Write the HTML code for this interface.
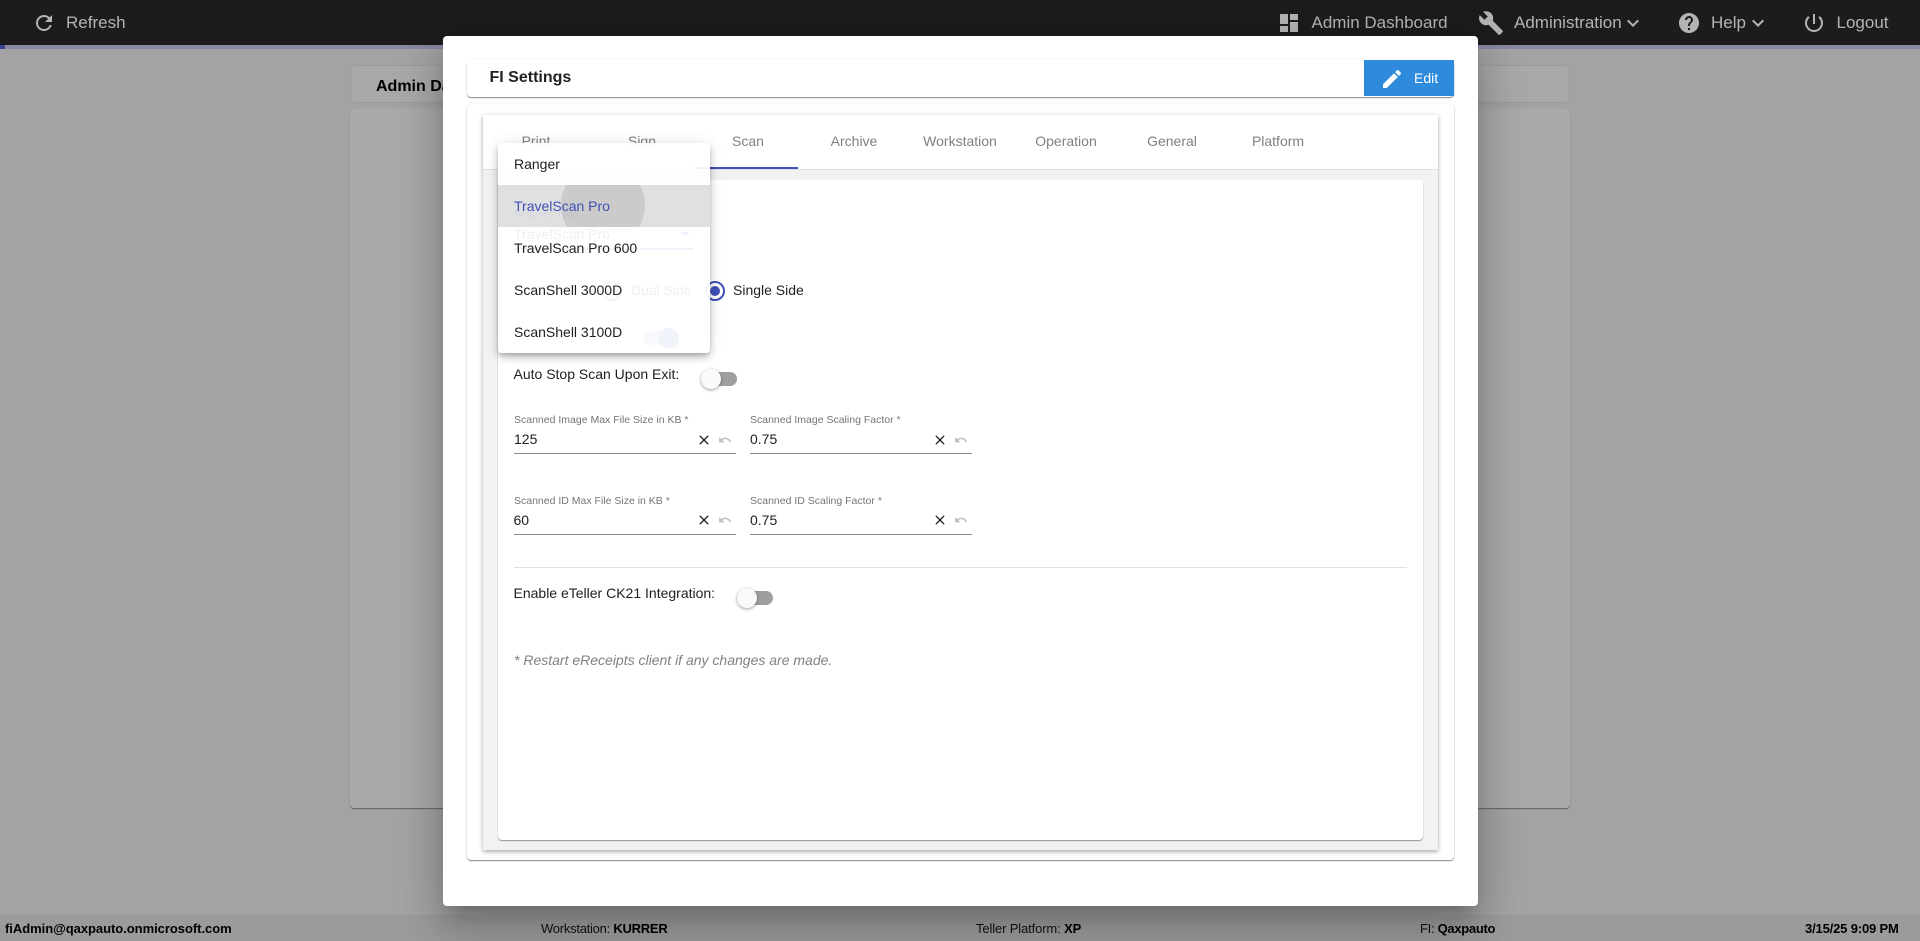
<!DOCTYPE html>
<html><head><meta charset="utf-8"><title>FI Settings</title>
<style>
html,body{margin:0;padding:0;width:1920px;height:941px;overflow:hidden;background:#a3a3a3;font-family:"Liberation Sans",Arial,sans-serif;}
.a{position:absolute;}
.t{position:absolute;white-space:nowrap;line-height:20px;}
svg{position:absolute;display:block;}
.hd{color:#b4b4b4;font-size:17px;}
.tab{position:absolute;top:131px;width:106px;text-align:center;font-size:14px;line-height:20px;color:#808080;}
.lbl{font-size:10.5px;color:#757575;line-height:14px;}
.v{font-size:14px;color:#212121;}
.ft{font-size:13px;color:#111;transform-origin:left center;}
.ft b{color:#000;}
.tk{position:absolute;width:36px;height:14px;border-radius:7px;background:#9e9e9e;}
.th{position:absolute;width:20px;height:20px;border-radius:50%;background:#fafafa;box-shadow:0 1px 3px rgba(0,0,0,.4);}
.li{position:absolute;left:16px;font-size:14px;line-height:20px;color:#212121;white-space:nowrap;}
</style></head><body>
<!-- background -->
<div class="a" style="left:0;top:0;width:1920px;height:45px;background:#1c1c1c"></div>
<div class="a" style="left:0;top:45px;width:1920px;height:4px;background:#8788a3"></div>
<div class="a" style="left:0;top:45px;width:5px;height:4px;background:#3a4592"></div>
<div class="a" style="left:350px;top:65px;width:1220px;height:38px;background:#a8a8a8;border:1px solid #9b9b9b;border-radius:4px;box-sizing:border-box"></div>
<div class="t" style="left:376px;top:77px;font-size:16px;font-weight:bold;color:#000">Admin Dashboard</div>
<div class="a" style="left:350px;top:109px;width:1220px;height:699px;background:#a9a9a9;border-radius:4px;box-shadow:0 1px 1px rgba(0,0,0,.4)"></div>
<!-- header -->
<svg style="left:32px;top:11px" width="24" height="24" viewBox="0 0 24 24" fill="#b4b4b4"><path d="M17.65 6.35C16.2 4.9 14.21 4 12 4c-4.42 0-7.99 3.58-7.99 8s3.57 8 7.99 8c3.73 0 6.84-2.55 7.73-6h-2.08c-.82 2.33-3.04 4-5.65 4-3.31 0-6-2.69-6-6s2.69-6 6-6c1.66 0 3.14.69 4.22 1.78L13 11h7V4l-2.35 2.35z"/></svg>
<div class="t hd" style="left:66px;top:13px">Refresh</div>
<svg style="left:1277px;top:11px" width="24" height="24" viewBox="0 0 24 24" fill="#b4b4b4"><path d="M3 13h8V3H3v10zm0 8h8v-6H3v6zm10 0h8V11h-8v10zm0-18v6h8V3h-8z"/></svg>
<div class="t hd" style="left:1311.5px;top:13px">Admin Dashboard</div>
<svg style="left:1478px;top:10px" width="26" height="26" viewBox="0 0 24 24" fill="#b4b4b4"><path d="M22.7 19l-9.1-9.1c.9-2.3.4-5-1.5-6.9-2-2-5-2.4-7.4-1.3L9 6 6 9 1.6 4.7C.4 7.1.9 10.1 2.9 12.1c1.9 1.9 4.6 2.4 6.9 1.5l9.1 9.1c.4.4 1 .4 1.4 0l2.3-2.3c.5-.4.5-1.1.1-1.4z"/></svg>
<div class="t hd" style="left:1514px;top:13px">Administration</div>
<svg style="left:1621px;top:11px" width="24" height="24" viewBox="0 0 24 24" fill="#b4b4b4"><path d="M16.59 8.59L12 13.17 7.41 8.59 6 10l6 6 6-6z"/></svg>
<svg style="left:1677px;top:11px" width="24" height="24" viewBox="0 0 24 24" fill="#b4b4b4"><path d="M12 2C6.48 2 2 6.48 2 12s4.48 10 10 10 10-4.48 10-10S17.52 2 12 2zm1 17h-2v-2h2v2zm2.07-7.75l-.9.92C13.45 12.9 13 13.5 13 15h-2v-.5c0-1.1.45-2.1 1.17-2.83l1.24-1.26c.37-.36.59-.86.59-1.41 0-1.1-.9-2-2-2s-2 .9-2 2H8c0-2.21 1.79-4 4-4s4 1.79 4 4c0 .88-.36 1.68-.93 2.25z"/></svg>
<div class="t hd" style="left:1711px;top:13px">Help</div>
<svg style="left:1746px;top:11px" width="24" height="24" viewBox="0 0 24 24" fill="#b4b4b4"><path d="M16.59 8.59L12 13.17 7.41 8.59 6 10l6 6 6-6z"/></svg>
<svg style="left:1802px;top:11px" width="24" height="24" viewBox="0 0 24 24" fill="#b4b4b4"><path d="M13 3h-2v10h2V3zm4.83 2.17l-1.42 1.42C17.99 7.86 19 9.81 19 12c0 3.87-3.13 7-7 7s-7-3.13-7-7c0-2.19 1.01-4.14 2.58-5.42L6.17 5.17C4.23 6.82 3 9.26 3 12c0 4.97 4.03 9 9 9s9-4.03 9-9c0-2.74-1.23-5.18-3.17-6.83z"/></svg>
<div class="t hd" style="left:1836.5px;top:13px">Logout</div>
<!-- footer -->
<div class="a" style="left:0;top:915px;width:1920px;height:26px;background:#9a9b9c"></div>
<div class="t ft" style="left:5px;top:919px;font-weight:bold;color:#000;letter-spacing:-.04px">fiAdmin@qaxpauto.onmicrosoft.com</div>
<div class="t ft" style="left:541px;top:919px;letter-spacing:-.25px">Workstation: <b>KURRER</b></div>
<div class="t ft" style="left:976px;top:919px;letter-spacing:-.13px">Teller Platform: <b>XP</b></div>
<div class="t ft" style="left:1420px;top:919px;letter-spacing:-.3px">FI: <b>Qaxpauto</b></div>
<div class="t ft" style="left:1805px;top:919px;font-weight:bold;color:#000;letter-spacing:-.16px">3/15/25 9:09 PM</div>
<!-- modal -->
<div class="a" style="left:443px;top:36px;width:1035px;height:870px;background:#fff;border-radius:4px;box-shadow:0 11px 15px -7px rgba(0,0,0,.2),0 24px 38px 3px rgba(0,0,0,.14),0 9px 46px 8px rgba(0,0,0,.12)"></div>
<div class="a" style="left:467px;top:60px;width:987px;height:37px;background:#fff;border-radius:4px;box-shadow:0 1px 1px rgba(0,0,0,.45),0 0 3px rgba(0,0,0,.06)"></div>
<div class="t" style="left:489.5px;top:68px;font-size:16px;font-weight:bold;color:#222">FI Settings</div>
<div class="a" style="left:1364px;top:60px;width:90px;height:36px;background:#2e8bdc"></div>
<svg style="left:1380px;top:67px" width="24" height="24" viewBox="0 0 24 24" fill="#fff"><path d="M3 17.25V21h3.75L17.81 9.94l-3.75-3.75L3 17.25zM20.71 7.04c.39-.39.39-1.02 0-1.41l-2.34-2.34c-.39-.39-1.02-.39-1.41 0l-1.83 1.83 3.75 3.75 1.83-1.83z"/></svg>
<div class="t" style="left:1414px;top:68px;font-size:14px;color:#fff">Edit</div>
<div class="a" style="left:467px;top:104px;width:987px;height:756px;background:#fff;border-radius:4px;box-shadow:0 1px 1px rgba(0,0,0,.45),0 0 3px rgba(0,0,0,.06)"></div>
<div class="a" style="left:483px;top:115px;width:955px;height:735px;background:#f2f2f2;box-shadow:0 2px 4px rgba(0,0,0,.28),0 0 5px rgba(0,0,0,.1)"></div>
<div class="a" style="left:483px;top:115px;width:955px;height:54px;background:#fff;border-bottom:1px solid #e0e0e0"></div>
<div class="tab" style="left:483px">Print</div>
<div class="tab" style="left:589px">Sign</div>
<div class="tab" style="left:695px">Scan</div>
<div class="tab" style="left:801px">Archive</div>
<div class="tab" style="left:907px">Workstation</div>
<div class="tab" style="left:1013px">Operation</div>
<div class="tab" style="left:1119px">General</div>
<div class="tab" style="left:1225px">Platform</div>
<div class="a" style="left:695px;top:167px;width:103px;height:2px;background:#3f51b5"></div>
<div class="a" style="left:498px;top:180px;width:925px;height:660px;background:#fff;border-radius:4px;box-shadow:0 1px 1px rgba(0,0,0,.4)"></div>
<!-- content -->
<div class="t" style="left:514px;top:207px;font-size:10.5px;line-height:14px;color:#3f51b5">Scanner Type</div>
<div class="t v" style="left:514px;top:224px">TravelScan Pro</div>
<svg style="left:680px;top:232px" width="10" height="5" viewBox="0 0 10 5" fill="#3f51b5"><path d="M0 0h10L5 5z"/></svg>
<div class="a" style="left:514px;top:248px;width:180px;height:2px;background:#3f51b5"></div>
<div class="a" style="left:602px;top:281px;width:16px;height:16px;border:2px solid #757575;border-radius:50%"></div>
<div class="t v" style="left:631px;top:280px">Dual Side</div>
<div class="a" style="left:705px;top:281px;width:16px;height:16px;border:2px solid #3f51b5;border-radius:50%"></div>
<div class="a" style="left:710px;top:286px;width:10px;height:10px;background:#3f51b5;border-radius:50%"></div>
<div class="t v" style="left:733px;top:280px">Single Side</div>
<div class="tk" style="left:643px;top:331px;background:#9fa8da"></div>
<div class="th" style="left:659px;top:328px;background:#3f51b5"></div>
<div class="t v" style="left:513.5px;top:364px">Auto Stop Scan Upon Exit:</div>
<div class="tk" style="left:701px;top:372px"></div><div class="th" style="left:701px;top:369px"></div>

<div class="t lbl" style="left:514px;top:413px">Scanned Image Max File Size in KB *</div>
<div class="t v" style="left:514px;top:429px">125</div>
<div class="a" style="left:514px;top:453px;width:222px;height:1px;background:#8a8a8a"></div>
<svg style="left:696px;top:432px" width="16" height="16" viewBox="0 0 24 24" fill="#222"><path d="M19 6.41L17.59 5 12 10.59 6.41 5 5 6.41 10.59 12 5 17.59 6.41 19 12 13.41 17.59 19 19 17.59 13.41 12z"/></svg>
<svg style="left:718px;top:433px" width="14" height="14" viewBox="0 0 24 24" fill="#bdbdbd"><path d="M12.5 8c-2.65 0-5.05.99-6.9 2.6L2 7v9h9l-3.62-3.62c1.39-1.16 3.16-1.88 5.12-1.88 3.54 0 6.55 2.31 7.6 5.5l2.37-.78C21.08 11.03 17.15 8 12.5 8z"/></svg>
<div class="t lbl" style="left:750px;top:413px">Scanned Image Scaling Factor *</div>
<div class="t v" style="left:750px;top:429px">0.75</div>
<div class="a" style="left:750px;top:453px;width:222px;height:1px;background:#8a8a8a"></div>
<svg style="left:932px;top:432px" width="16" height="16" viewBox="0 0 24 24" fill="#222"><path d="M19 6.41L17.59 5 12 10.59 6.41 5 5 6.41 10.59 12 5 17.59 6.41 19 12 13.41 17.59 19 19 17.59 13.41 12z"/></svg>
<svg style="left:954px;top:433px" width="14" height="14" viewBox="0 0 24 24" fill="#bdbdbd"><path d="M12.5 8c-2.65 0-5.05.99-6.9 2.6L2 7v9h9l-3.62-3.62c1.39-1.16 3.16-1.88 5.12-1.88 3.54 0 6.55 2.31 7.6 5.5l2.37-.78C21.08 11.03 17.15 8 12.5 8z"/></svg>

<div class="t lbl" style="left:514px;top:494px">Scanned ID Max File Size in KB *</div>
<div class="t v" style="left:513.5px;top:510px">60</div>
<div class="a" style="left:514px;top:534px;width:222px;height:1px;background:#8a8a8a"></div>
<svg style="left:696px;top:512px" width="16" height="16" viewBox="0 0 24 24" fill="#222"><path d="M19 6.41L17.59 5 12 10.59 6.41 5 5 6.41 10.59 12 5 17.59 6.41 19 12 13.41 17.59 19 19 17.59 13.41 12z"/></svg>
<svg style="left:718px;top:513px" width="14" height="14" viewBox="0 0 24 24" fill="#bdbdbd"><path d="M12.5 8c-2.65 0-5.05.99-6.9 2.6L2 7v9h9l-3.62-3.62c1.39-1.16 3.16-1.88 5.12-1.88 3.54 0 6.55 2.31 7.6 5.5l2.37-.78C21.08 11.03 17.15 8 12.5 8z"/></svg>
<div class="t lbl" style="left:750px;top:494px">Scanned ID Scaling Factor *</div>
<div class="t v" style="left:750px;top:510px">0.75</div>
<div class="a" style="left:750px;top:534px;width:222px;height:1px;background:#8a8a8a"></div>
<svg style="left:932px;top:512px" width="16" height="16" viewBox="0 0 24 24" fill="#222"><path d="M19 6.41L17.59 5 12 10.59 6.41 5 5 6.41 10.59 12 5 17.59 6.41 19 12 13.41 17.59 19 19 17.59 13.41 12z"/></svg>
<svg style="left:954px;top:513px" width="14" height="14" viewBox="0 0 24 24" fill="#bdbdbd"><path d="M12.5 8c-2.65 0-5.05.99-6.9 2.6L2 7v9h9l-3.62-3.62c1.39-1.16 3.16-1.88 5.12-1.88 3.54 0 6.55 2.31 7.6 5.5l2.37-.78C21.08 11.03 17.15 8 12.5 8z"/></svg>

<div class="a" style="left:514px;top:567px;width:893px;height:1px;background:#e0e0e0"></div>
<div class="t v" style="left:513.5px;top:583px">Enable eTeller CK21 Integration:</div>
<div class="tk" style="left:737px;top:591px"></div><div class="th" style="left:737px;top:588px"></div>
<div class="t" style="left:514px;top:650px;font-size:14px;font-style:italic;color:#808080">* Restart eReceipts client if any changes are made.</div>
<!-- dropdown -->
<div class="a" style="left:498px;top:143px;width:212px;height:210px;background:rgba(255,255,255,.93);border-radius:4px;box-shadow:0 3px 5px -1px rgba(0,0,0,.2),0 5px 8px 0 rgba(0,0,0,.14),0 1px 14px 0 rgba(0,0,0,.12);overflow:hidden">
  <div class="a" style="left:0;top:42px;width:212px;height:42px;background:rgba(0,0,0,.12);overflow:hidden">
    <div class="a" style="left:63px;top:-22px;width:84px;height:84px;border-radius:50%;background:rgba(0,0,0,.09)"></div>
  </div>
  <div class="li" style="top:11px">Ranger</div>
  <div class="li" style="top:53px;color:#3f51b5">TravelScan Pro</div>
  <div class="li" style="top:95px">TravelScan Pro 600</div>
  <div class="li" style="top:137px">ScanShell 3000D</div>
  <div class="li" style="top:179px">ScanShell 3100D</div>
</div>
</body></html>
